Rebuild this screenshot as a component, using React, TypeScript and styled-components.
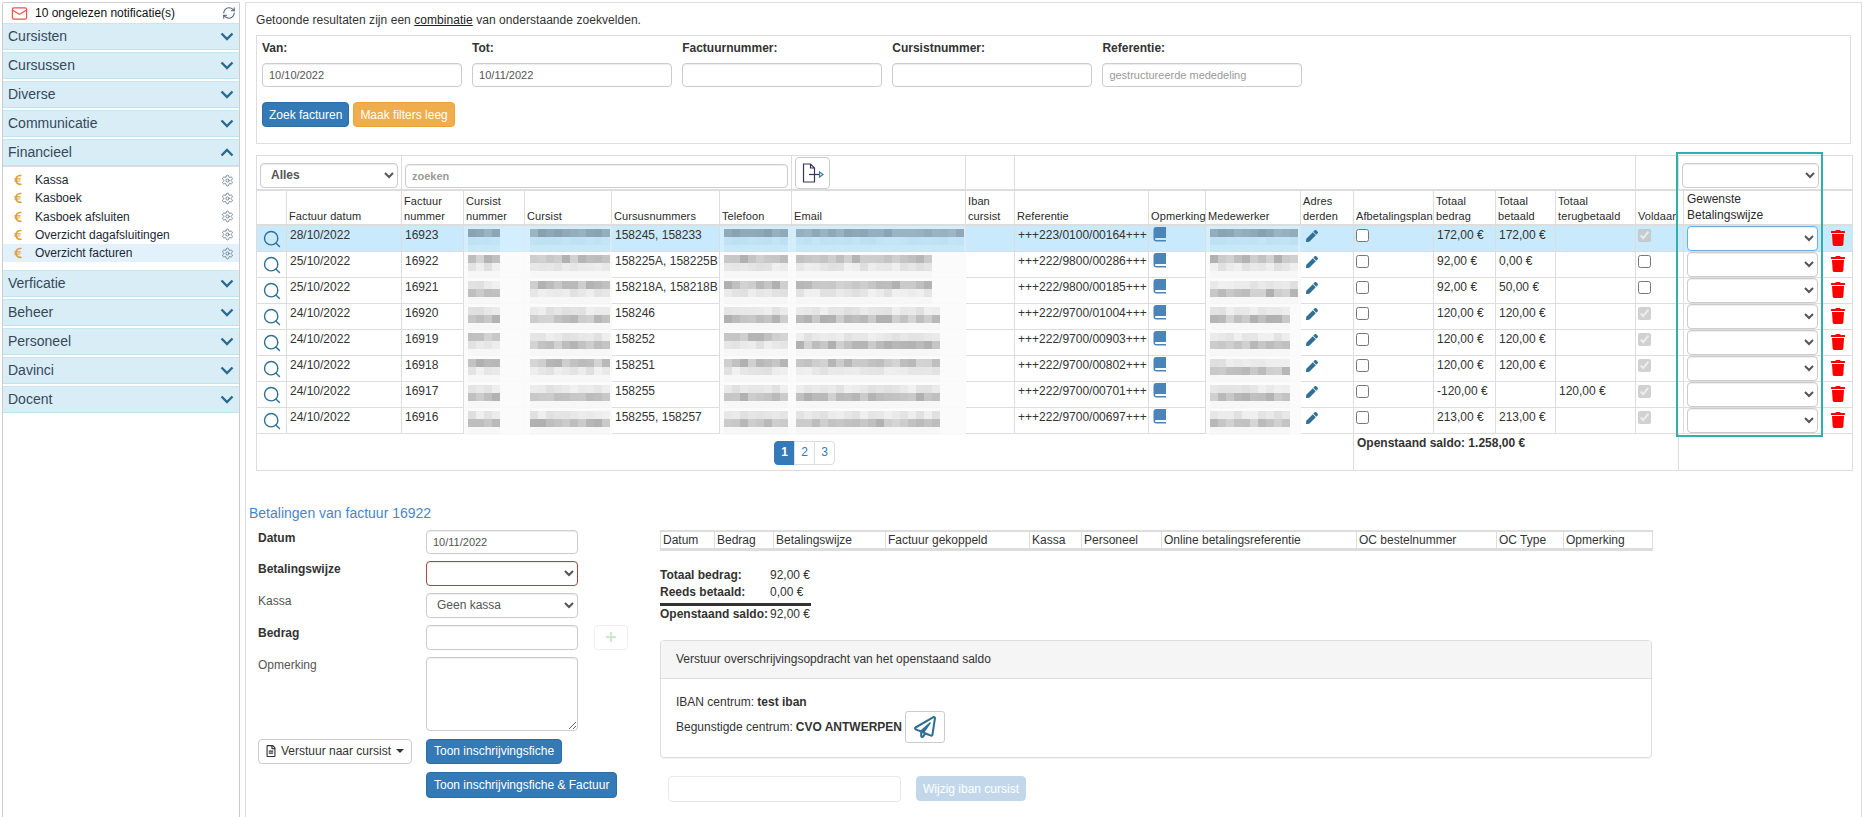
import React from "react";
import styled, { createGlobalStyle } from "styled-components";
import { Search, Settings, RefreshCw, Mail } from "lucide-react";
import { FaEuroSign, FaPen, FaTrash, FaPlus, FaRegFileAlt, FaRegPaperPlane } from "react-icons/fa";

const Global = createGlobalStyle`
  html, body { margin: 0; height: 100%; overflow: hidden; background: #fff; }
  body { font-family: "Liberation Sans", Arial, sans-serif; font-size: 12px; color: #333; }
  * { box-sizing: border-box; }
`;

const Page = styled.div`
  display: flex;
  height: 100vh;
  padding: 2px 0 0 2px;
`;

/* ---------- sidebar ---------- */
const Sidebar = styled.aside`
  width: 238px;
  flex: none;
  border: 1px solid #ccc;
  border-bottom: none;
  border-radius: 2px 2px 0 0;
`;
const NotifyRow = styled.div`
  height: 20px;
  display: flex;
  align-items: center;
  padding: 0 3px 0 8px;
  color: #111;
  svg:first-child { margin-right: 7px; }
  span { flex: 1; }
`;
const AccordionHeader = styled.div`
  height: 27px;
  margin-bottom: 2px;
  background: #d9edf7;
  border-top: 1px solid #c4e7f2;
  border-bottom: 1px solid #bfe3ef;
  display: flex;
  align-items: center;
  justify-content: space-between;
  padding: 0 5px 1px 5px;
  font-size: 14px;
  color: #35495a;
`;
const SubList = styled.div`
  margin-top: -2px;
  padding: 4px 0 8px;
  border-top: 1px solid #ddd;
`;
const SubItem = styled.div<{ $active?: boolean }>`
  height: 18.25px;
  display: flex;
  align-items: center;
  padding: 0 5px 0 10px;
  color: #1c2733;
  background: ${(p) => (p.$active ? "#e3f1fc" : "transparent")};
  span { flex: 1; margin-left: 12px; }
`;
const EuroIcon = styled(FaEuroSign)`
  color: #dda23c;
  width: 10px;
  height: 12px;
  flex: none;
`;
const Chevron: React.FC<{ up?: boolean }> = ({ up }) => (
  <svg width="14" height="9" viewBox="0 0 14 9" fill="none" stroke="#2b6a8f" strokeWidth="2.4">
    <path d={up ? "M1.5 7.5 L7 2 L12.5 7.5" : "M1.5 1.5 L7 7 L12.5 1.5"} />
  </svg>
);

/* ---------- main ---------- */
const Main = styled.main`
  width: 1617px;
  margin-left: 5px;
  flex: none;
  border: 1px solid #ddd;
  border-bottom: none;
  padding: 0 0 0 3px;
`;
const Intro = styled.div`
  height: 32px;
  line-height: 34px;
  margin-left: 7px;
  letter-spacing: 0.05px;
  u { color: #222; }
`;
const FilterBox = styled.section`
  height: 109px;
  width: 1595px;
  margin-left: 7px;
  border: 1px solid #ddd;
  padding-left: 5px;
`;
const FilterGrid = styled.div`
  display: grid;
  grid-template-columns: repeat(5, 200px);
  column-gap: 10.1px;
`;
const FilterLabel = styled.label`
  display: block;
  font-weight: bold;
  height: 27px;
  line-height: 24px;
`;
const TextInput = styled.input<{ $w?: string; $h?: number; $invalid?: boolean }>`
  display: block;
  width: ${(p) => p.$w || "100%"};
  height: ${(p) => p.$h || 24}px;
  border: 1px solid #ccc;
  border-radius: 4px;
  padding: 0 6px;
  font: 11px "Liberation Sans", Arial, sans-serif;
  color: #555;
  background: #fff;
  box-shadow: inset 0 1px 1px rgba(0, 0, 0, 0.075);
  &::placeholder { color: #999; opacity: 1; }
`;
const ButtonRow = styled.div`
  display: flex;
  gap: 4px;
  margin-top: 15px;
`;
const Btn = styled.button<{ $kind: "blue" | "orange" | "pale" }>`
  height: 25px;
  padding: 0 6px;
  border-radius: 4px;
  font: 12px "Liberation Sans", Arial, sans-serif;
  white-space: nowrap;
  color: #fff;
  background: ${(p) => ({ blue: "#337ab7", orange: "#f0ad4e", pale: "#c2d7ea" }[p.$kind])};
  border: 1px solid ${(p) => ({ blue: "#2e6da4", orange: "#eea236", pale: "#c2d7ea" }[p.$kind])};
`;

/* ---------- invoice table ---------- */
const TableWrap = styled.div`
  position: relative;
  width: 1596px;
  margin: 11px 0 0 7px;
`;
const TealFrame = styled.div`
  position: absolute;
  left: 1420px;
  top: -3px;
  width: 147px;
  height: 285px;
  border: 2px solid #31b0a9;
  pointer-events: none;
`;
const Table = styled.table`
  width: 1596px;
  table-layout: fixed;
  border-collapse: collapse;
`;
const ToolRow = styled.tr`
  height: 34px;
  td {
    border: 1px solid #ddd;
    border-bottom: 2px solid #ddd;
    padding: 0 3px;
    position: relative;
    vertical-align: bottom;
  }
  select, input { margin-bottom: 1px; }
`;
const HeadRow = styled.tr`
  height: 35px;
`;
const Th = styled.th<{ $plain?: boolean }>`
  border: 1px solid #ddd;
  border-bottom: 2px solid #ddd;
  padding: ${(p) => (p.$plain ? "0 0 0 3px" : "0 0 0 2px")};
  font-weight: normal;
  font-size: ${(p) => (p.$plain ? 12 : 11)}px;
  letter-spacing: ${(p) => (p.$plain ? 0 : 0.1)}px;
  line-height: ${(p) => (p.$plain ? 16.5 : 15)}px;
  text-align: left;
  vertical-align: ${(p) => (p.$plain ? "top" : "bottom")};
  color: #2a2a2a;
  white-space: nowrap;
`;
const BodyRow = styled.tr<{ $hl?: boolean }>`
  height: 26px;
  background: ${(p) => (p.$hl ? "#c9eafc" : "transparent")};
`;
const FootRow = styled.tr`
  height: 37px;
`;
const Td = styled.td`
  position: relative;
  border: 1px solid #ddd;
  padding: 1px 3px 0;
  line-height: 17px;
  vertical-align: top;
  white-space: nowrap;
  overflow: visible;
`;
const IconTd = styled(Td)`
  padding: 0;
  vertical-align: middle;
  text-align: center;
`;
const SelectTd = styled(Td)`
  padding: 0 4px 0 3px;
  vertical-align: middle;
`;
const NativeSelect = styled.select<{ $strong?: boolean; $focus?: boolean; $invalid?: boolean; $w?: number }>`
  display: block;
  width: ${(p) => (p.$w ? `${p.$w}px` : "100%")};
  height: 25px;
  border: 1px solid ${(p) => (p.$invalid ? "#a94442" : p.$focus ? "#66afe9" : "#ccc")};
  border-radius: 4px;
  background-color: #fff;
  padding-left: 6px;
  font: ${(p) => (p.$strong ? "bold " : "")}12px "Liberation Sans", Arial, sans-serif;
  color: #555;
  box-shadow: inset 0 1px 1px rgba(0, 0, 0, 0.075);
`;
const SearchField = styled(TextInput)`
  font-weight: bold;
`;
const ExportBtn = styled.div`
  width: 35px;
  height: 32px;
  border: 1px solid #ccc;
  border-radius: 4px;
  display: flex;
  align-items: center;
  justify-content: center;
`;
const BookIcon = () => (
  <svg width="14" height="15" viewBox="0 0 14 15" fill="#4a84b8">
    <path d="M3 0 H13 V11 H3 A1 1 0 0 0 3 13 H13 V14.5 H3 A2.6 2.6 0 0 1 .5 12 V2.5 A2.6 2.6 0 0 1 3 0 Z" />
  </svg>
);
const BookCell = styled(Td)`
  padding: 1px 0 0 4px;
  svg { display: block; }
`;
const PenCell = styled(Td)`
  padding: 4px 0 0 5px;
  svg { display: block; color: #2f7094; }
`;
const CheckCell = styled(Td)`
  padding: 2px 0 0 2px;
  input { display: block; margin: 1px 0 0 0; width: 13px; height: 13px; }
`;
const TrashIcon = styled(FaTrash)`
  color: #f00;
  width: 14px;
  height: 16px;
  display: block;
  margin: 0 auto;
`;
const SearchIcon = styled(Search)`
  color: #2f7094;
  display: block;
  margin: 1px auto 0;
`;
const Pager = styled.div`
  display: flex;
  justify-content: center;
  margin-top: 6px;
`;
const PageItem = styled.span<{ $active?: boolean }>`
  width: 21px;
  height: 24px;
  display: flex;
  align-items: center;
  justify-content: center;
  margin-left: -1px;
  border: 1px solid ${(p) => (p.$active ? "#337ab7" : "#ddd")};
  background: ${(p) => (p.$active ? "#337ab7" : "#fff")};
  color: ${(p) => (p.$active ? "#fff" : "#337ab7")};
  font-weight: ${(p) => (p.$active ? "bold" : "normal")};
  &:first-child { border-radius: 4px 0 0 4px; }
  &:last-child { border-radius: 0 4px 4px 0; }
`;
const SaldoCell = styled(Td)`
  font-weight: bold;
`;
const MosaicSvg = styled.svg`
  position: absolute;
  left: 0;
  top: 0;
  pointer-events: none;
`;

const rnd = (s: number, i: number, j: number) => {
  const v = Math.sin(s * 12.9898 + i * 78.233 + j * 37.719) * 43758.5453;
  return v - Math.floor(v);
};
const Mosaic: React.FC<{ w: number; x: number; cols: number; seed: number; strong: number; hl?: boolean }> = ({ w, x, cols, seed, strong, hl }) => {
  const cells: React.ReactNode[] = [];
  for (let r = 0; r < 3; r++) {
    for (let c = 0; c < cols; c++) {
      const n = rnd(seed, r, c);
      const a = r === strong ? 0.15 + n * 0.15 : r === 2 ? 0.015 : 0.04 + n * 0.07;
      const fill = hl ? (r === strong ? "#4a6272" : "#5ba6cf") : "#000";
      const alpha = hl ? (r === strong ? a + 0.25 : a + 0.08) : a;
      cells.push(<rect key={`${r}-${c}`} x={x + c * 8} y={3 + r * 8} width={8} height={8} fill={fill} fillOpacity={alpha} />);
    }
  }
  return (
    <MosaicSvg width={w} height={27} viewBox={`0 0 ${w} 27`}>
      <rect width={w} height={27} fill={hl ? "#dff3fd" : "#fbfbfb"} fillOpacity={hl ? 0.45 : 0.92} />
      {cells}
    </MosaicSvg>
  );
};

const widths = [30, 115, 62, 61, 87, 108, 72, 174, 49, 134, 57, 95, 53, 80, 62, 60, 80, 43, 5, 139, 30];
const rows = [
  { d: "28/10/2022", n: "16923", c: "158245, 158233", r: "+++223/0100/00164+++", t: "172,00 €", b: "172,00 €", g: "", v: true, s: [0, 0, 0, 0, 0], em: 21, me: 11 },
  { d: "25/10/2022", n: "16922", c: "158225A, 158225B", r: "+++222/9800/00286+++", t: "92,00 €", b: "0,00 €", g: "", v: false, s: [0, 0, 0, 0, 0], em: 17, me: 11 },
  { d: "25/10/2022", n: "16921", c: "158218A, 158218B", r: "+++222/9800/00185+++", t: "92,00 €", b: "50,00 €", g: "", v: false, s: [1, 0, 0, 0, 1], em: 17, me: 11 },
  { d: "24/10/2022", n: "16920", c: "158246", r: "+++222/9700/01004+++", t: "120,00 €", b: "120,00 €", g: "", v: true, s: [1, 1, 1, 1, 1], em: 18, me: 10 },
  { d: "24/10/2022", n: "16919", c: "158252", r: "+++222/9700/00903+++", t: "120,00 €", b: "120,00 €", g: "", v: true, s: [0, 1, 0, 1, 1], em: 18, me: 10 },
  { d: "24/10/2022", n: "16918", c: "158251", r: "+++222/9700/00802+++", t: "120,00 €", b: "120,00 €", g: "", v: true, s: [0, 0, 0, 0, 1], em: 18, me: 10 },
  { d: "24/10/2022", n: "16917", c: "158255", r: "+++222/9700/00701+++", t: "-120,00 €", b: "", g: "120,00 €", v: true, s: [1, 1, 1, 1, 1], em: 18, me: 10 },
  { d: "24/10/2022", n: "16916", c: "158255, 158257", r: "+++222/9700/00697+++", t: "213,00 €", b: "213,00 €", g: "", v: true, s: [1, 1, 1, 1, 1], em: 18, me: 10 },
];

/* ---------- lower section ---------- */
const Title = styled.h3`
  margin: 32px 0 7px;
  font-size: 14px;
  font-weight: normal;
  line-height: 20px;
  color: #4a86c5;
`;
const Lower = styled.div`
  display: flex;
`;
const PayForm = styled.div`
  width: 402px;
  margin-left: 9px;
  flex: none;
  display: grid;
  grid-template-columns: 168px 152px 1fr;
  row-gap: 7px;
  align-content: start;
`;
const FormLabel = styled.label<{ $bold?: boolean }>`
  line-height: 17px;
  font-weight: ${(p) => (p.$bold ? "bold" : "normal")};
  color: ${(p) => (p.$bold ? "#333" : "#555")};
`;
const Memo = styled.textarea`
  display: block;
  width: 152px;
  height: 74px;
  border: 1px solid #ccc;
  border-radius: 4px;
  box-shadow: inset 0 1px 1px rgba(0, 0, 0, 0.075);
`;
const PlusBtn = styled.div`
  width: 34px;
  height: 25px;
  margin-left: 16px;
  border: 1px solid #eee;
  border-radius: 4px;
  display: flex;
  align-items: center;
  justify-content: center;
  color: #cfe8cf;
`;
const SendDropdown = styled.div`
  width: 154px;
  height: 25px;
  margin-top: 1px;
  border: 1px solid #ccc;
  border-radius: 4px;
  display: flex;
  align-items: center;
  justify-content: center;
  gap: 5px;
  color: #333;
  svg { width: 10px; height: 12px; }
  i { border-top: 4px solid #333; border-left: 4px solid transparent; border-right: 4px solid transparent; margin-left: 0; }
`;
const GridBtn = styled(Btn)<{ $span?: boolean }>`
  justify-self: start;
  padding: 0 7px;
  margin-top: 1px;
  height: ${(p) => (p.$span ? 26 : 25)}px;
  grid-column: ${(p) => (p.$span ? "2 / span 2" : "2")};
`;
const Right = styled.div`
  width: 992px;
  flex: none;
`;
const PayTable = styled.table`
  width: 992px;
  table-layout: fixed;
  border-collapse: collapse;
  th {
    height: 19px;
    padding: 0 0 0 2px;
    border: 1px solid #ddd;
    border-top-width: 2px;
    border-bottom: 3px solid #ddd;
    font-weight: normal;
    text-align: left;
    white-space: nowrap;
    color: #333;
  }
`;
const Totals = styled.div`
  width: 151px;
  margin-top: 16px;
  display: grid;
  grid-template-columns: 110px 1fr;
  line-height: 17px;
  b { font-weight: bold; }
`;
const TotalRule = styled.div`
  grid-column: 1 / span 2;
  height: 3px;
  margin: 2px 0 0;
  background: #333;
`;
const Panel = styled.section`
  margin-top: 17px;
  height: 118px;
  border: 1px solid #ddd;
  border-radius: 4px;
  box-shadow: 0 1px 1px rgba(0, 0, 0, 0.05);
`;
const PanelHead = styled.div`
  height: 38px;
  background: #f5f5f5;
  border-bottom: 1px solid #ddd;
  padding-left: 15px;
  line-height: 36px;
  border-radius: 3px 3px 0 0;
`;
const PanelBody = styled.div`
  padding: 14px 15px 0;
  line-height: 18px;
`;
const BeneficiaryRow = styled.div`
  display: flex;
  align-items: center;
  gap: 3px;
`;
const PlaneBtn = styled.div`
  width: 40px;
  height: 32px;
  margin-left: 0;
  border: 1px solid #ccc;
  border-radius: 3px;
  display: flex;
  align-items: center;
  justify-content: center;
  color: #2f7094;
`;
const IbanRow = styled.div`
  display: flex;
  gap: 15px;
  margin: 18px 0 0 8px;
`;
const IbanInput = styled(TextInput)`
  border-color: #e8e8e8;
  box-shadow: none;
  height: 26px;
`;

const menu = ["Cursisten", "Cursussen", "Diverse", "Communicatie"];
const fin = ["Kassa", "Kasboek", "Kasboek afsluiten", "Overzicht dagafsluitingen", "Overzicht facturen"];
const menu2 = ["Verficatie", "Beheer", "Personeel", "Davinci", "Docent"];
const payCols: [string, number][] = [["Datum", 54], ["Bedrag", 59], ["Betalingswijze", 112], ["Factuur gekoppeld", 144], ["Kassa", 52], ["Personeel", 80], ["Online betalingsreferentie", 195], ["OC bestelnummer", 140], ["OC Type", 67], ["Opmerking", 89]];

export default function App() {
  return (
    <>
      <Global />
      <Page>
        <Sidebar>
          <NotifyRow>
            <Mail size={17} color="#f5504a" strokeWidth={1.7} />
            <span>10 ongelezen notificatie(s)</span>
            <RefreshCw size={14} color="#46637a" strokeWidth={1.8} />
          </NotifyRow>
          {menu.map((m) => (
            <AccordionHeader key={m}>{m}<Chevron /></AccordionHeader>
          ))}
          <AccordionHeader>Financieel<Chevron up /></AccordionHeader>
          <SubList>
            {fin.map((f, i) => (
              <SubItem key={f} $active={i === 4}>
                <EuroIcon />
                <span>{f}</span>
                <Settings size={13} color="#64788c" strokeWidth={1.6} />
              </SubItem>
            ))}
          </SubList>
          {menu2.map((m) => (
            <AccordionHeader key={m}>{m}<Chevron /></AccordionHeader>
          ))}
        </Sidebar>
        <Main>
          <Intro>Getoonde resultaten zijn een <u>combinatie</u> van onderstaande zoekvelden.</Intro>
          <FilterBox>
            <FilterGrid>
              <div><FilterLabel>Van:</FilterLabel><TextInput defaultValue="10/10/2022" /></div>
              <div><FilterLabel>Tot:</FilterLabel><TextInput defaultValue="10/11/2022" /></div>
              <div><FilterLabel>Factuurnummer:</FilterLabel><TextInput /></div>
              <div><FilterLabel>Cursistnummer:</FilterLabel><TextInput /></div>
              <div><FilterLabel>Referentie:</FilterLabel><TextInput placeholder="gestructureerde mededeling" /></div>
            </FilterGrid>
            <ButtonRow>
              <Btn $kind="blue">Zoek facturen</Btn>
              <Btn $kind="orange">Maak filters leeg</Btn>
            </ButtonRow>
          </FilterBox>

          <TableWrap>
            <Table>
              <colgroup>{widths.map((w, i) => <col key={i} width={w} />)}</colgroup>
              <tbody>
                <ToolRow>
                  <td colSpan={2}><NativeSelect $strong><option>Alles</option></NativeSelect></td>
                  <td colSpan={5}><SearchField placeholder="zoeken" /></td>
                  <td>
                    <ExportBtn>
                      <svg width="24" height="20" viewBox="0 0 24 20" fill="none" stroke="#3a3558" strokeWidth="1.2">
                        <path d="M2.5 1 H9.5 L13.5 5 V19 H2.5 Z M9.5 1 V5 H13.5" />
                        <path d="M8 11.5 H18" />
                        <path d="M18.5 9 L22 11.5 L18.5 14 Z" stroke="#3f78a8" />
                      </svg>
                    </ExportBtn>
                  </td>
                  <td />
                  <td colSpan={8} />
                  <td />
                  <td colSpan={2}><NativeSelect /></td>
                  <td />
                </ToolRow>
                <HeadRow>
                  <Th />
                  <Th>Factuur datum</Th>
                  <Th>Factuur<br />nummer</Th>
                  <Th>Cursist<br />nummer</Th>
                  <Th>Cursist</Th>
                  <Th>Cursusnummers</Th>
                  <Th>Telefoon</Th>
                  <Th>Email</Th>
                  <Th>Iban<br />cursist</Th>
                  <Th>Referentie</Th>
                  <Th>Opmerking</Th>
                  <Th>Medewerker</Th>
                  <Th>Adres<br />derden</Th>
                  <Th>Afbetalingsplan</Th>
                  <Th>Totaal<br />bedrag</Th>
                  <Th>Totaal<br />betaald</Th>
                  <Th>Totaal<br />terugbetaald</Th>
                  <Th colSpan={2}>Voldaan</Th>
                  <Th $plain>Gewenste<br />Betalingswijze</Th>
                  <Th />
                </HeadRow>
                {rows.map((r, i) => (
                  <BodyRow key={r.n} $hl={i === 0}>
                    <IconTd><SearchIcon size={20} strokeWidth={1.7} /></IconTd>
                    <Td>{r.d}</Td>
                    <Td>{r.n}</Td>
                    <Td><Mosaic w={61} x={4} cols={4} seed={i * 5 + 1} strong={r.s[0]} hl={i === 0} /></Td>
                    <Td><Mosaic w={87} x={5} cols={10} seed={i * 5 + 2} strong={r.s[1]} hl={i === 0} /></Td>
                    <Td>{r.c}</Td>
                    <Td><Mosaic w={72} x={4} cols={8} seed={i * 5 + 3} strong={r.s[2]} hl={i === 0} /></Td>
                    <Td><Mosaic w={174} x={4} cols={r.em} seed={i * 5 + 4} strong={r.s[3]} hl={i === 0} /></Td>
                    <Td />
                    <Td>{r.r}</Td>
                    <BookCell><BookIcon /></BookCell>
                    <Td><Mosaic w={95} x={4} cols={r.me} seed={i * 5 + 5} strong={r.s[4]} hl={i === 0} /></Td>
                    <PenCell><FaPen size={12} /></PenCell>
                    <CheckCell><input type="checkbox" readOnly /></CheckCell>
                    <Td>{r.t}</Td>
                    <Td>{r.b}</Td>
                    <Td>{r.g}</Td>
                    <CheckCell colSpan={2}><input type="checkbox" checked={r.v} disabled={r.v} readOnly /></CheckCell>
                    <SelectTd><NativeSelect $focus={i === 0} /></SelectTd>
                    <IconTd><TrashIcon /></IconTd>
                  </BodyRow>
                ))}
                <FootRow>
                  <Td colSpan={13}>
                    <Pager>
                      <PageItem $active>1</PageItem>
                      <PageItem>2</PageItem>
                      <PageItem>3</PageItem>
                    </Pager>
                  </Td>
                  <SaldoCell colSpan={5}>Openstaand saldo: 1.258,00 €</SaldoCell>
                  <Td colSpan={3} />
                </FootRow>
              </tbody>
            </Table>
            <TealFrame />
          </TableWrap>

          <Title>Betalingen van factuur 16922</Title>
          <Lower>
            <PayForm>
              <FormLabel $bold>Datum</FormLabel>
              <TextInput defaultValue="10/11/2022" />
              <span />
              <FormLabel $bold>Betalingswijze</FormLabel>
              <NativeSelect $invalid />
              <span />
              <FormLabel>Kassa</FormLabel>
              <NativeSelect><option>Geen kassa</option></NativeSelect>
              <span />
              <FormLabel $bold>Bedrag</FormLabel>
              <TextInput $h={25} />
              <PlusBtn><FaPlus size={12} /></PlusBtn>
              <FormLabel>Opmerking</FormLabel>
              <Memo />
              <span />
              <SendDropdown><FaRegFileAlt />Verstuur naar cursist<i /></SendDropdown>
              <GridBtn $kind="blue">Toon inschrijvingsfiche</GridBtn>
              <span />
              <GridBtn $kind="blue" $span>Toon inschrijvingsfiche &amp; Factuur</GridBtn>
            </PayForm>
            <Right>
              <PayTable>
                <colgroup>{payCols.map(([, w], i) => <col key={i} width={w} />)}</colgroup>
                <thead><tr>{payCols.map(([t]) => <th key={t}>{t}</th>)}</tr></thead>
              </PayTable>
              <Totals>
                <b>Totaal bedrag:</b><span>92,00 €</span>
                <b>Reeds betaald:</b><span>0,00 €</span>
                <TotalRule />
                <b>Openstaand saldo:</b><span>92,00 €</span>
              </Totals>
              <Panel>
                <PanelHead>Verstuur overschrijvingsopdracht van het openstaand saldo</PanelHead>
                <PanelBody>
                  <div>IBAN centrum: <b>test iban</b></div>
                  <BeneficiaryRow>
                    <span>Begunstigde centrum:</span><b>CVO ANTWERPEN</b>
                    <PlaneBtn><FaRegPaperPlane size={22} /></PlaneBtn>
                  </BeneficiaryRow>
                </PanelBody>
              </Panel>
              <IbanRow>
                <IbanInput $w="233px" />
                <Btn $kind="pale">Wijzig iban cursist</Btn>
              </IbanRow>
            </Right>
          </Lower>
        </Main>
      </Page>
    </>
  );
}
